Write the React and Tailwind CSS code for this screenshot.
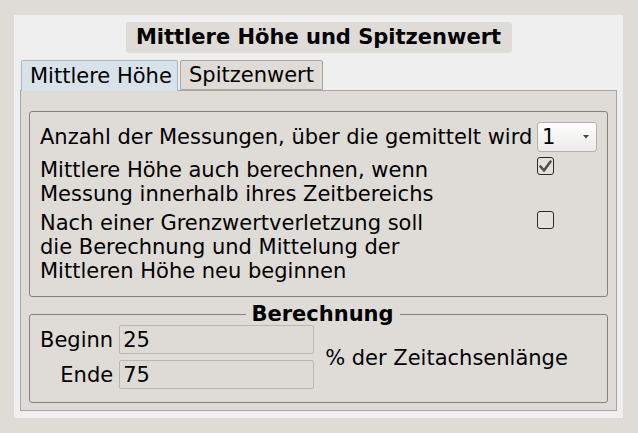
import React from "react";

const font = { fontFamily: '"DejaVu Sans", Verdana, sans-serif' };

const Checkbox = ({ checked }) => (
  <div className="w-[17px] h-[18px] rounded-[3px] border-[1.5px] border-[#2a2a2a] bg-[#e4e1dd] flex items-center justify-center">
    {checked && (
      <svg width="13" height="12" viewBox="0 0 13 12">
        <path d="M1.5 6.5 L5 10.5 L11.5 1.5" fill="none" stroke="#505050" strokeWidth="2.6" strokeLinecap="round" strokeLinejoin="round" />
      </svg>
    )}
  </div>
);

const App = () => {
  return (
    <div className="w-[638px] h-[433px] bg-[#dfdbd7] pt-[15px] pl-[14px] text-black" style={font}>
      <div className="w-[609px] h-[403px] bg-[#efefef] flex flex-col">
        {/* Title */}
        <div className="flex justify-center mt-[7px]">
          <div className="h-[31px] w-[386px] bg-[#dfdbd7] rounded-[3px] flex items-center justify-center text-[21px] font-bold leading-none">
            Mittlere Höhe und Spitzenwert
          </div>
        </div>

        {/* Tabs */}
        <div className="flex gap-[2px] mt-[7px] ml-[7px] h-[30px] relative z-10">
          <div className="w-[157px] h-[31px] bg-[#d8e2ea] border border-[#a9b6c2] border-b-0 rounded-t-[2px] pl-[8px] flex items-center text-[21px] leading-none">
            Mittlere Höhe
          </div>
          <div className="w-[143px] h-[30px] bg-[#dfdcd8] border border-[#aaa7a3] rounded-t-[2px] flex items-center justify-center text-[21px] leading-none">
            Spitzenwert
          </div>
        </div>

        {/* Pane */}
        <div className="ml-[6px] w-[597px] h-[321px] bg-[#dfdcd8] border border-[#a9a6a2] flex flex-col pl-[8px] text-[21px] leading-[24px]">
          <div className="mt-[20px] w-[579px] h-[186px] border border-[#85827e] rounded-[3px] pl-[10px] pt-[10px] flex flex-col gap-[5px]">
            <div className="flex items-center h-[30px]">
              <div className="w-[497px]">Anzahl der Messungen, über die gemittelt wird</div>
              <div className="w-[60px] h-[30px] rounded-[3px] border border-[#b5b2ae] bg-gradient-to-b from-white to-[#ebeae8] flex items-center justify-between pl-[4px] pr-[7px]">
                <span>1</span>
                <svg width="6" height="4" viewBox="0 0 6 4">
                  <path d="M0 0 H6 L3 3.5 Z" fill="#444" />
                </svg>
              </div>
            </div>
            <div className="flex items-start">
              <div className="w-[497px] pt-[1px]">
                Mittlere Höhe auch berechnen, wenn
                <br />
                Messung innerhalb ihres Zeitbereichs
              </div>
              <Checkbox checked />
            </div>
            <div className="flex items-start">
              <div className="w-[497px]">
                Nach einer Grenzwertverletzung soll
                <br />
                die Berechnung und Mittelung der
                <br />
                Mittleren Höhe neu beginnen
              </div>
              <Checkbox />
            </div>
          </div>

          <div className="mt-[17px] w-[579px] h-[89px] border border-[#85827e] rounded-[3px] relative pt-[10px] pl-[10px] flex items-center">
            <div className="absolute left-[calc(50%+4px)] -translate-x-1/2 -top-[12px] px-[6px] bg-[#dfdcd8] font-bold text-[21px] leading-[22px]">
              Berechnung
            </div>
            <div className="grid grid-cols-[auto_195px] gap-x-[6px] gap-y-[6px] items-center self-start">
              <div className="text-right">Beginn</div>
              <div className="h-[29px] border border-[#b9b6b2] rounded-[2px] bg-[#dedbd7] pl-[3px] flex items-center">25</div>
              <div className="text-right">Ende</div>
              <div className="h-[29px] border border-[#b9b6b2] rounded-[2px] bg-[#dedbd7] pl-[3px] flex items-center">75</div>
            </div>
            <div className="ml-[11px] self-start mt-[21px]">% der Zeitachsenlänge</div>
          </div>
        </div>
      </div>
    </div>
  );
};

export default App;
